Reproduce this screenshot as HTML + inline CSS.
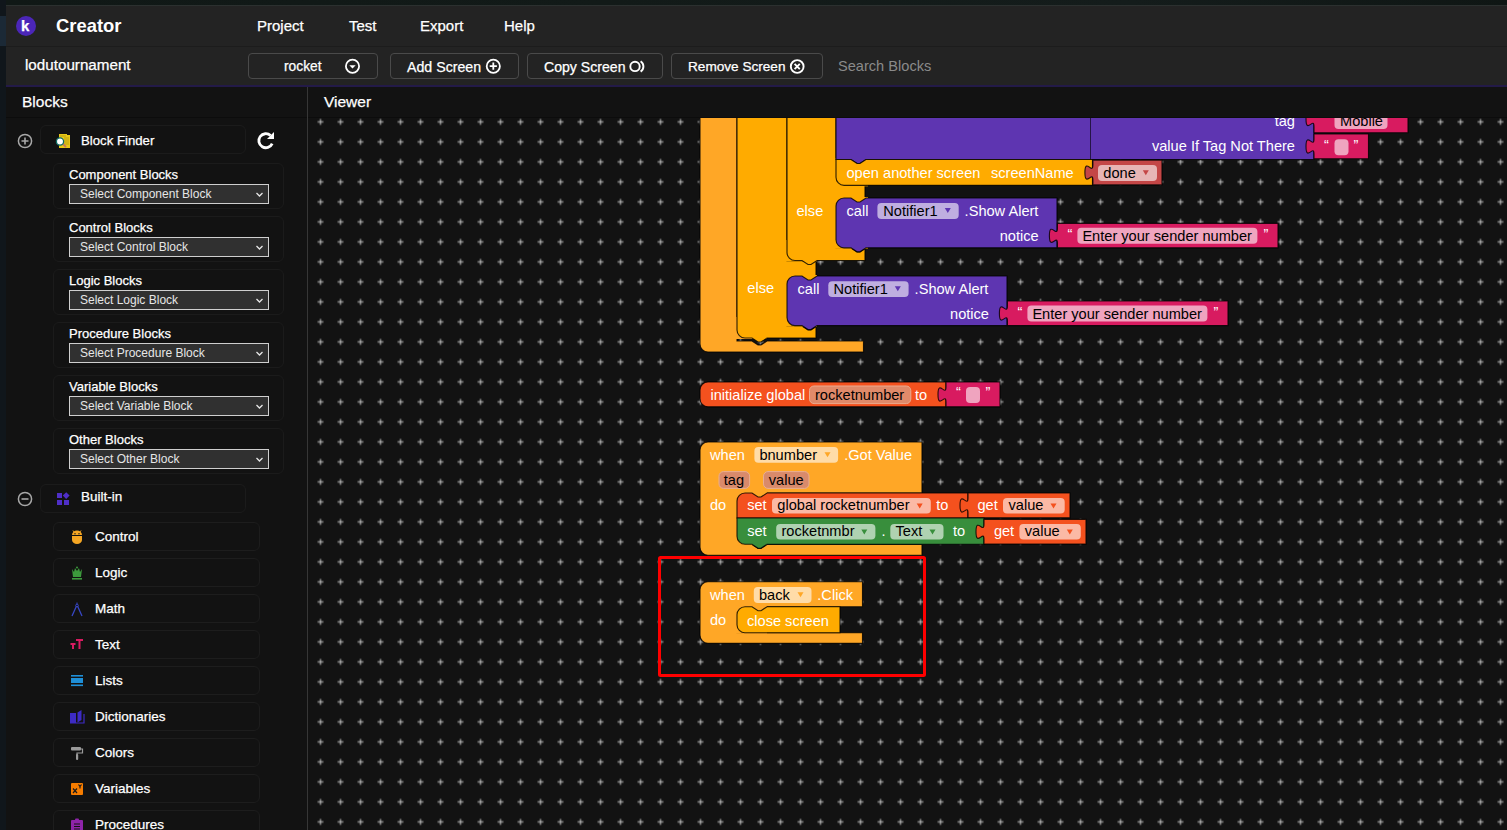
<!DOCTYPE html>
<html><head><meta charset="utf-8">
<style>
*{box-sizing:border-box;margin:0;padding:0}
html,body{width:1507px;height:830px;overflow:hidden;background:#121212;font-family:"Liberation Sans",sans-serif;color:#fff}
.a{position:absolute;white-space:pre}
div.a{-webkit-text-stroke:0.25px currentColor}
div.selt,div.ns{-webkit-text-stroke:0}
#strip{left:0;top:0;width:6px;height:830px;background:#10161b}
#strip2{left:0;top:16px;width:6px;height:30px;background:#1b2936}
#topstrip{left:6px;top:0;width:1501px;height:5px;background:linear-gradient(90deg,#101816,#121a18 40%,#141c1b 75%,#0f1614)}
#hdr1{left:6px;top:5px;width:1501px;height:41px;background:#232323;border-top:1px solid #2b302f}
#hdr1b{left:6px;top:46px;width:1501px;height:1px;background:#1c1c1c}
#hdr2{left:6px;top:47px;width:1501px;height:38px;background:#232323}
#pline{left:6px;top:85px;width:1501px;height:2px;background:#231a48}
#side{left:6px;top:87px;width:301px;height:743px;background:#121212}
#vline{left:307px;top:87px;width:1px;height:743px;background:#363636}
#ws{left:308px;top:87px;width:1199px;height:743px;background:#121212}
#hline{left:6px;top:117px;width:1501px;height:1px;background:#0c0c0c}
.nav{font-size:15px;top:17px}
.btn{top:53px;height:26px;border:1px solid #4a4a4a;border-radius:4px}
.bt{font-size:14.4px;top:58.5px}
.card{border:1px solid #1b1b1b;border-radius:6px;background:#121212}
.lbl{font-size:13px}
.sel{height:20px;background:#303030;border:1px solid #cfcfcf;width:200px;left:69px}
.selt{font-size:12px;color:#e6e6e6}
.item{left:53px;width:207px;height:29px;border:1px solid #1d1d1d;border-radius:6px;background:#121212}
.it{font-size:13.5px;left:95px;margin-top:1px}
</style></head><body>
<div class="a" id="strip"></div>
<div class="a" id="strip2"></div>
<div class="a" id="topstrip"></div>
<div class="a" id="hdr1"></div>
<div class="a" id="hdr1b"></div>
<div class="a" id="hdr2"></div>
<div class="a" id="pline"></div>
<div class="a" id="side"></div>
<div class="a" id="ws"></div>
<div class="a" id="hline"></div>
<div class="a" id="vline"></div>

<!-- header row 1 -->
<div class="a" style="left:16px;top:16px;width:20px;height:20px;border-radius:50%;background:#4b26b8"></div>
<div class="a" style="left:21px;top:16px;font-size:15px;font-weight:700;line-height:20px">k</div>
<div class="a ns" style="left:56px;top:15px;font-size:18.4px;font-weight:700">Creator</div>
<div class="a nav" style="left:257px">Project</div>
<div class="a nav" style="left:349px">Test</div>
<div class="a nav" style="left:420px">Export</div>
<div class="a nav" style="left:504px">Help</div>

<!-- header row 2 -->
<div class="a" style="left:25px;top:56px;font-size:15.2px">lodutournament</div>
<div class="a btn" style="left:248px;width:130px"></div>
<div class="a bt" style="left:284px;font-size:13.8px">rocket</div>
<div class="a btn" style="left:390px;width:129px"></div>
<div class="a bt" style="left:407px;font-size:14.2px">Add Screen</div>
<div class="a btn" style="left:527px;width:136px"></div>
<div class="a bt" style="left:544px;font-size:14.1px">Copy Screen</div>
<div class="a btn" style="left:671px;width:152px"></div>
<div class="a bt" style="left:688px;font-size:13.6px;top:59px">Remove Screen</div>
<div class="a ns" style="left:838px;top:58px;font-size:14.6px;color:#8a8a8a">Search Blocks</div>


<svg class="a" style="left:344px;top:58px" width="18" height="18"><circle cx="8.5" cy="8.3" r="6.6" fill="none" stroke="#fff" stroke-width="1.8"/><path d="M5.3 7.2 h6.4 l-3.2 3.4 z" fill="#fff"/></svg>
<svg class="a" style="left:484px;top:58px" width="18" height="18"><circle cx="9.3" cy="8.2" r="6.6" fill="none" stroke="#fff" stroke-width="1.8"/><path d="M9.3 4.6 v7.2 M5.7 8.2 h7.2" stroke="#fff" stroke-width="1.8"/></svg>
<svg class="a" style="left:626px;top:58px" width="22" height="18"><circle cx="9" cy="8.4" r="4.7" fill="none" stroke="#fff" stroke-width="1.9"/><path d="M14.6 3.2 A6.2 6.2 0 0 1 14.6 13.6" fill="none" stroke="#fff" stroke-width="1.9"/></svg>
<svg class="a" style="left:788px;top:58px" width="18" height="18"><circle cx="9.2" cy="8.5" r="6.4" fill="none" stroke="#fff" stroke-width="1.9"/><path d="M6.6 5.9 l5.2 5.2 M11.8 5.9 l-5.2 5.2" stroke="#fff" stroke-width="1.9"/></svg>
<!-- panel headers -->
<div class="a" style="left:22px;top:93px;font-size:15.5px">Blocks</div>
<div class="a" style="left:324px;top:93px;font-size:15.5px">Viewer</div>


<!-- sidebar -->
<svg class="a" style="left:17px;top:133px" width="16" height="16"><circle cx="8" cy="8" r="6.6" fill="none" stroke="#a8a8a8" stroke-width="1.5"/><path d="M8 4.5v7M4.5 8h7" stroke="#a8a8a8" stroke-width="1.6"/></svg>
<div class="a card" style="left:40px;top:125px;width:206px;height:29px"></div>
<svg class="a" style="left:55px;top:132px" width="18" height="18">
 <path d="M4 2 h8 l0 1 h3 v13 h-11 z" fill="#E8C817"/><path d="M5 4h6M9 6h5M9 8h5M9 10h5M9 12h5" stroke="#A8900E" stroke-width="0.7"/>
 <path d="M7 11 l4 4" stroke="#C8785A" stroke-width="1.8"/><circle cx="5" cy="9.5" r="3.6" fill="#fff" stroke="#0F6E64" stroke-width="1.3"/></svg>
<div class="a" style="left:81px;top:132.5px;font-size:13.2px">Block Finder</div>
<svg class="a" style="left:255px;top:130px" width="22" height="22"><path d="M17.2 13.6 A7 7 0 1 1 15.6 5.6" fill="none" stroke="#fff" stroke-width="2.8"/><path d="M19 2 V9 H12 Z" fill="#fff"/></svg>
<div class="a card" style="left:53px;top:163px;width:231px;height:46px"></div>
<div class="a lbl" style="left:69px;top:167px">Component Blocks</div>
<div class="a sel" style="top:184px"></div>
<div class="a selt" style="left:80px;top:187px">Select Component Block</div>
<svg class="a" style="left:255px;top:191px" width="10" height="8"><path d="M1.5 2 L4.5 5 L7.5 2" fill="none" stroke="#e6e6e6" stroke-width="1.3"/></svg>
<div class="a card" style="left:53px;top:216px;width:231px;height:46px"></div>
<div class="a lbl" style="left:69px;top:220px">Control Blocks</div>
<div class="a sel" style="top:237px"></div>
<div class="a selt" style="left:80px;top:240px">Select Control Block</div>
<svg class="a" style="left:255px;top:244px" width="10" height="8"><path d="M1.5 2 L4.5 5 L7.5 2" fill="none" stroke="#e6e6e6" stroke-width="1.3"/></svg>
<div class="a card" style="left:53px;top:269px;width:231px;height:46px"></div>
<div class="a lbl" style="left:69px;top:273px">Logic Blocks</div>
<div class="a sel" style="top:290px"></div>
<div class="a selt" style="left:80px;top:293px">Select Logic Block</div>
<svg class="a" style="left:255px;top:297px" width="10" height="8"><path d="M1.5 2 L4.5 5 L7.5 2" fill="none" stroke="#e6e6e6" stroke-width="1.3"/></svg>
<div class="a card" style="left:53px;top:322px;width:231px;height:46px"></div>
<div class="a lbl" style="left:69px;top:326px">Procedure Blocks</div>
<div class="a sel" style="top:343px"></div>
<div class="a selt" style="left:80px;top:346px">Select Procedure Block</div>
<svg class="a" style="left:255px;top:350px" width="10" height="8"><path d="M1.5 2 L4.5 5 L7.5 2" fill="none" stroke="#e6e6e6" stroke-width="1.3"/></svg>
<div class="a card" style="left:53px;top:375px;width:231px;height:46px"></div>
<div class="a lbl" style="left:69px;top:379px">Variable Blocks</div>
<div class="a sel" style="top:396px"></div>
<div class="a selt" style="left:80px;top:399px">Select Variable Block</div>
<svg class="a" style="left:255px;top:403px" width="10" height="8"><path d="M1.5 2 L4.5 5 L7.5 2" fill="none" stroke="#e6e6e6" stroke-width="1.3"/></svg>
<div class="a card" style="left:53px;top:428px;width:231px;height:46px"></div>
<div class="a lbl" style="left:69px;top:432px">Other Blocks</div>
<div class="a sel" style="top:449px"></div>
<div class="a selt" style="left:80px;top:452px">Select Other Block</div>
<svg class="a" style="left:255px;top:456px" width="10" height="8"><path d="M1.5 2 L4.5 5 L7.5 2" fill="none" stroke="#e6e6e6" stroke-width="1.3"/></svg>

<svg class="a" style="left:17px;top:491px" width="16" height="16"><circle cx="8" cy="8" r="6.6" fill="none" stroke="#a8a8a8" stroke-width="1.5"/><path d="M4.5 8h7" stroke="#a8a8a8" stroke-width="1.6"/></svg>
<div class="a card" style="left:40px;top:484px;width:206px;height:29px"></div>
<svg class="a" style="left:55px;top:490px" width="18" height="18"><g fill="#4F2FC8"><rect x="2" y="3" width="5" height="5"/><rect x="2" y="10" width="5" height="5"/><rect x="9" y="10" width="5" height="5"/><path d="M11.2 2.2 L14.6 5.6 L11.2 9 L7.8 5.6 Z"/></g></svg>
<div class="a" style="left:81px;top:489px;font-size:13.5px">Built-in</div>
<div class="a item" style="top:522px"></div>
<svg class="a" style="left:69px;top:529px" width="16" height="16"><path d="M3 6 a5 4.5 0 0 1 10 0 z" fill="#F5A623"/><path d="M3 7 h10 v4 a5 4 0 0 1 -10 0 z" fill="#F5A623"/><path d="M4 1.5 l1.5 2 M12 1.5 l-1.5 2" stroke="#F5A623" stroke-width="1"/><circle cx="6" cy="4.8" r="0.7" fill="#121212"/><circle cx="10" cy="4.8" r="0.7" fill="#121212"/></svg>
<div class="a it" style="top:528px">Control</div>
<div class="a item" style="top:558px"></div>
<svg class="a" style="left:69px;top:565px" width="16" height="16"><path d="M3 4 l2 3 l1 -4 l2 3 l2 -3 l1 4 l2 -3 l-1 8 h-8 z" fill="#3C9A3C"/><rect x="3" y="13" width="10" height="1.6" fill="#3C9A3C"/><circle cx="8" cy="2.5" r="1" fill="#3C9A3C"/></svg>
<div class="a it" style="top:564px">Logic</div>
<div class="a item" style="top:594px"></div>
<svg class="a" style="left:69px;top:601px" width="16" height="16"><path d="M3 15 L7.5 5 M13 15 L8.5 5" stroke="#3747C4" stroke-width="1.3" fill="none"/><circle cx="8" cy="4.5" r="1.3" fill="none" stroke="#3747C4" stroke-width="1"/><path d="M8 1.5v1.6" stroke="#3747C4"/></svg>
<div class="a it" style="top:600px">Math</div>
<div class="a item" style="top:630px"></div>
<svg class="a" style="left:69px;top:637px" width="16" height="16"><path d="M1.5 7 h5 M4 7 v5 M7 3 h7 M10.5 3 v9" stroke="#D81B60" stroke-width="2" fill="none"/></svg>
<div class="a it" style="top:636px">Text</div>
<div class="a item" style="top:666px"></div>
<svg class="a" style="left:69px;top:673px" width="16" height="16"><rect x="2" y="2" width="12" height="1.6" fill="#1E8FD8"/><rect x="2" y="5" width="12" height="5" fill="#1E8FD8"/><rect x="2" y="11.5" width="12" height="1.6" fill="#1E8FD8"/></svg>
<div class="a it" style="top:672px">Lists</div>
<div class="a item" style="top:702px"></div>
<svg class="a" style="left:69px;top:709px" width="16" height="16"><path d="M1 4 h6 v10 h-6 z" fill="#3D2BC4"/><path d="M8.5 3.5 l4 -2.5 v10 l-4 2.5 z" fill="#3D2BC4"/><path d="M1 14 h14 v-9" stroke="#3D2BC4" stroke-width="1.2" fill="none"/></svg>
<div class="a it" style="top:708px">Dictionaries</div>
<div class="a item" style="top:738px"></div>
<svg class="a" style="left:69px;top:745px" width="16" height="16"><rect x="2" y="2" width="10" height="3.5" rx="1" fill="#9a9a9a"/><path d="M12 4 h1.5 v4 h-5.5 v2" stroke="#9a9a9a" stroke-width="1.2" fill="none"/><rect x="7" y="9" width="2.2" height="6" rx="1" fill="#9a9a9a"/></svg>
<div class="a it" style="top:744px">Colors</div>
<div class="a item" style="top:774px"></div>
<svg class="a" style="left:69px;top:781px" width="16" height="16"><rect x="2" y="2" width="12" height="12" rx="1" fill="#F57C00"/><path d="M4 7.5 l4 4.5 M8 7.5 l-4 4.5 M9.5 3.5 l1.5 2 l1.5 -2 M11 5.5 v2" stroke="#1a1a1a" stroke-width="1.2" fill="none"/></svg>
<div class="a it" style="top:780px">Variables</div>
<div class="a item" style="top:810px"></div>
<svg class="a" style="left:69px;top:817px" width="16" height="16"><rect x="2" y="3" width="12" height="13" rx="1" fill="#8E24AA"/><rect x="6" y="1.5" width="4" height="3" rx="1" fill="#8E24AA"/><path d="M5 7 h6 M5 9.5 h6 M5 12 h6" stroke="#121212" stroke-width="1"/></svg>
<div class="a it" style="top:816px">Procedures</div>
<svg class="a" style="left:308px;top:118px" width="1199" height="712" font-family="Liberation Sans, sans-serif"><g transform="translate(-308,-118)">
<defs><pattern id="grid" x="310" y="111.4" width="20" height="20" patternUnits="userSpaceOnUse">
<rect x="7.5" y="9.6" width="6" height="1.8" fill="#fff" fill-opacity="0.42"/><rect x="9.6" y="7.5" width="1.8" height="6" fill="#fff" fill-opacity="0.42"/>
</pattern></defs>
<rect x="308" y="118" width="1199" height="712" fill="url(#grid)"/>
<path d="M700 100 V344 a8 8 0 0 0 8 8 H863.5 V341 H767 l-6 4 -3 0 -6 -4 H737 V100 Z" fill="#FFA726" stroke="#000" stroke-opacity="0.8" stroke-width="1.15"/>
<rect x="736" y="317" width="31" height="22" rx="0" fill="#FFA726" />
<path d="M737 100 V330 a8 8 0 0 0 8 8 H752 l6 4 3 0 6 -4 H816 V326 H817 l-6 4 -3 0 -6 -4 H787 V276 H802 l6 4 3 0 6 -4 H816 V261 H787 V100 Z" fill="#FFAB00" stroke="#000" stroke-opacity="0.8" stroke-width="1.15"/>
<text x="747.3" y="292.8" fill="#fff" font-size="14.6" text-anchor="start">else</text>
<rect x="786" y="240" width="31" height="21.5" rx="0" fill="#FFAB00" />
<rect x="786" y="275" width="31" height="51.6" rx="0" fill="#FFAB00" />
<path d="M787 100 V252.5 a8 8 0 0 0 8 8 H802 l6 4 3 0 6 -4 H865 V248 H866 l-6 4 -3 0 -6 -4 H836 V198 H851 l6 4 3 0 6 -4 H865 V185.3 H836 V100 Z" fill="#FFAB00" stroke="#000" stroke-opacity="0.8" stroke-width="1.15"/>
<text x="796.5" y="215.5" fill="#fff" font-size="14.6" text-anchor="start">else</text>
<rect x="835" y="158.5" width="33" height="27.8" rx="0" fill="#FFAB00" />
<rect x="835" y="197" width="33" height="51.8" rx="0" fill="#FFAB00" />
<path d="M836 100 H1314 V159.5 H866 l-6 4 -3 0 -6 -4 H836 Z" fill="#5E35B1" stroke="#000" stroke-opacity="0.8" stroke-width="1.15"/>
<path d="M1090.5 100 V159.5" stroke="#000" stroke-opacity="0.6" stroke-width="1"/>
<text x="1295" y="126.4" fill="#fff" font-size="14.6" text-anchor="end">tag</text>
<text x="1295" y="151.4" fill="#fff" font-size="14.6" text-anchor="end">value If Tag Not There</text>
<path d="M1314 100 H1408 V132.7 H1314 V126.5 c 0,-10 -8,8 -8,-7.5 s 8,2.5 8,-7.5 Z" fill="#D81B60" stroke="#000" stroke-opacity="0.8" stroke-width="1.15"/>
<rect x="1334.5" y="100" width="53" height="29" rx="4" fill="#EFA4BF" />
<text x="1340" y="125.7" fill="#000" font-size="14.6" text-anchor="start">Mobile</text>
<text x="1393.5" y="121.5" fill="#fff" font-size="14.6" text-anchor="start">”</text>
<path d="M1314 134 H1368.5 V158.7 H1314 V154 c 0,-10 -8,8 -8,-7.5 s 8,2.5 8,-7.5 Z" fill="#D81B60" stroke="#000" stroke-opacity="0.8" stroke-width="1.15"/>
<text x="1324" y="149.5" fill="#fff" font-size="14.6" text-anchor="start">“</text>
<rect x="1334.5" y="139.2" width="14" height="16" rx="4" fill="#EFA4BF" />
<text x="1353.5" y="149.5" fill="#fff" font-size="14.6" text-anchor="start">”</text>
<path d="M836 159.5 H851 l6 4 3 0 6 -4 H1092.5 V185.3 H844 a8 8 0 0 1 -8 -8 Z" fill="#FFAB00" stroke="#000" stroke-opacity="0.8" stroke-width="1.15"/>
<text x="846.5" y="177.7" fill="#fff" font-size="14.6" text-anchor="start">open another screen</text>
<text x="991" y="177.7" fill="#fff" font-size="14.6" text-anchor="start">screenName</text>
<path d="M1092.9 160.1 H1162 V184.9 H1092.9 V180.1 c 0,-10 -8,8 -8,-7.5 s 8,2.5 8,-7.5 Z" fill="#C44646" stroke="#000" stroke-opacity="0.8" stroke-width="1.15"/>
<rect x="1098" y="165" width="59" height="16" rx="4" fill="#E7B5B5" />
<text x="1103.3" y="177.8" fill="#000" font-size="14.6" text-anchor="start">done</text>
<path d="M1142.8 170.2 h6 l-3 5 z" fill="#C44646"/>
<path d="M836 206 a8 8 0 0 1 8 -8 H851 l6 4 3 0 6 -4 H1057 V247.8 H866 l-6 4 -3 0 -6 -4 H844 a8 8 0 0 1 -8 -8 Z" fill="#5E35B1" stroke="#000" stroke-opacity="0.8" stroke-width="1.15"/>
<text x="846.5" y="216.2" fill="#fff" font-size="14.6" text-anchor="start">call</text>
<rect x="877.4" y="203" width="81.3" height="16" rx="4" fill="#BFAEE0" />
<text x="883.3" y="215.9" fill="#000" font-size="14.6" text-anchor="start">Notifier1</text>
<path d="M944.8 208 h6 l-3 5 z" fill="#5E35B1"/>
<text x="964.6" y="216.2" fill="#fff" font-size="14.6" text-anchor="start">.Show Alert</text>
<text x="1038.7" y="241" fill="#fff" font-size="14.6" text-anchor="end">notice</text>
<path d="M1057.4 223.3 H1278.0 V247.8 H1057.4 V243.3 c 0,-10 -8,8 -8,-7.5 s 8,2.5 8,-7.5 Z" fill="#D81B60" stroke="#000" stroke-opacity="0.8" stroke-width="1.15"/>
<text x="1067.4" y="238.8" fill="#fff" font-size="14.6" text-anchor="start">“</text>
<rect x="1077.4" y="227.8" width="180" height="16" rx="4" fill="#EFA4BF" />
<text x="1082.4" y="240.8" fill="#000" font-size="14.6" text-anchor="start">Enter your sender number</text>
<text x="1263.4" y="238.8" fill="#fff" font-size="14.6" text-anchor="start">”</text>
<path d="M787 284 a8 8 0 0 1 8 -8 H802 l6 4 3 0 6 -4 H1007 V325.6 H817 l-6 4 -3 0 -6 -4 H795 a8 8 0 0 1 -8 -8 Z" fill="#5E35B1" stroke="#000" stroke-opacity="0.8" stroke-width="1.15"/>
<text x="797.5" y="294.2" fill="#fff" font-size="14.6" text-anchor="start">call</text>
<rect x="828.3" y="281.3" width="80.3" height="15.8" rx="4" fill="#BFAEE0" />
<text x="833.5" y="293.8" fill="#000" font-size="14.6" text-anchor="start">Notifier1</text>
<path d="M894.8 286.2 h6 l-3 5 z" fill="#5E35B1"/>
<text x="914.6" y="294.2" fill="#fff" font-size="14.6" text-anchor="start">.Show Alert</text>
<text x="989" y="318.7" fill="#fff" font-size="14.6" text-anchor="end">notice</text>
<path d="M1007.4 301 H1228.0 V325.6 H1007.4 V321 c 0,-10 -8,8 -8,-7.5 s 8,2.5 8,-7.5 Z" fill="#D81B60" stroke="#000" stroke-opacity="0.8" stroke-width="1.15"/>
<text x="1017.4" y="316.5" fill="#fff" font-size="14.6" text-anchor="start">“</text>
<rect x="1027.4" y="305.5" width="180" height="16" rx="4" fill="#EFA4BF" />
<text x="1032.4" y="318.5" fill="#000" font-size="14.6" text-anchor="start">Enter your sender number</text>
<text x="1213.4" y="316.5" fill="#fff" font-size="14.6" text-anchor="start">”</text>
<path d="M708 381.9 H946 V406.8 H708 a8 8 0 0 1 -8 -8 V389.9 a8 8 0 0 1 8 -8 Z" fill="#F4511E" stroke="#000" stroke-opacity="0.8" stroke-width="1.15"/>
<text x="710.4" y="400" fill="#fff" font-size="14.6" text-anchor="start">initialize global</text>
<rect x="809.5" y="386" width="101.3" height="17.6" rx="4.5" fill="#E08A6A" stroke="#EBAA8E" stroke-width="1"/>
<text x="815" y="400" fill="#000" font-size="14.6" text-anchor="start">rocketnumber</text>
<text x="915" y="400" fill="#fff" font-size="14.6" text-anchor="start">to</text>
<path d="M946 381.9 H1000 V406.8 H946 V402 c 0,-10 -8,8 -8,-7.5 s 8,2.5 8,-7.5 Z" fill="#D81B60" stroke="#000" stroke-opacity="0.8" stroke-width="1.15"/>
<text x="956" y="397" fill="#fff" font-size="14.6" text-anchor="start">“</text>
<rect x="966" y="387" width="14" height="16" rx="4" fill="#EFA4BF" />
<text x="985.5" y="397" fill="#fff" font-size="14.6" text-anchor="start">”</text>
<path d="M700 450 a8 8 0 0 1 8 -8 H922 V493 H767 l-6 4 -3 0 -6 -4 H737 V544.4 H752 l6 4 3 0 6 -4 H922 V555.2 H708 a8 8 0 0 1 -8 -8 Z" fill="#FFA726" stroke="#000" stroke-opacity="0.8" stroke-width="1.15"/>
<text x="710" y="459.8" fill="#fff" font-size="14.6" text-anchor="start">when</text>
<rect x="754.4" y="447" width="83.7" height="15.7" rx="4" fill="#FFDCA8" />
<text x="759.4" y="459.8" fill="#000" font-size="14.6" text-anchor="start">bnumber</text>
<path d="M824.5 452.2 h6 l-3 5 z" fill="#FFA726"/>
<text x="844.2" y="459.8" fill="#fff" font-size="14.6" text-anchor="start">.Got Value</text>
<rect x="719" y="471.6" width="30.6" height="16.8" rx="4.5" fill="#D98A6B" stroke="#E8AE92" stroke-width="1"/>
<text x="723.8" y="484.6" fill="#000" font-size="14.6" text-anchor="start">tag</text>
<rect x="763.5" y="471.6" width="45.5" height="16.8" rx="4.5" fill="#D98A6B" stroke="#E8AE92" stroke-width="1"/>
<text x="768.8" y="484.6" fill="#000" font-size="14.6" text-anchor="start">value</text>
<text x="710" y="509.6" fill="#fff" font-size="14.6" text-anchor="start">do</text>
<rect x="736" y="492" width="31" height="53.2" rx="0" fill="#FFA726" />
<path d="M737 501 a8 8 0 0 1 8 -8 H752 l6 4 3 0 6 -4 H968 V518 H737 Z" fill="#F4511E" stroke="#000" stroke-opacity="0.8" stroke-width="1.15"/>
<text x="747.2" y="510.4" fill="#fff" font-size="14.6" text-anchor="start">set</text>
<rect x="772" y="498" width="158.8" height="15.5" rx="4" fill="#FBB9A5" />
<text x="777.3" y="510.2" fill="#000" font-size="14.6" text-anchor="start">global rocketnumber</text>
<path d="M916.7 503.6 h6 l-3 5 z" fill="#F4511E"/>
<text x="936.2" y="510.4" fill="#fff" font-size="14.6" text-anchor="start">to</text>
<path d="M968 493 H1070 V517.8 H968 V513 c 0,-10 -8,8 -8,-7.5 s 8,2.5 8,-7.5 Z" fill="#F4511E" stroke="#000" stroke-opacity="0.8" stroke-width="1.15"/>
<text x="977.5" y="510.4" fill="#fff" font-size="14.6" text-anchor="start">get</text>
<rect x="1003" y="498" width="61.7" height="15.5" rx="4" fill="#FBB9A5" />
<text x="1008.5" y="510.2" fill="#000" font-size="14.6" text-anchor="start">value</text>
<path d="M1050.5 503.6 h6 l-3 5 z" fill="#F4511E"/>
<path d="M737 518 H984 V544.2 H767 l-6 4 -3 0 -6 -4 H745 a8 8 0 0 1 -8 -8 Z" fill="#388E3C" stroke="#000" stroke-opacity="0.8" stroke-width="1.15"/>
<text x="747.2" y="536.1" fill="#fff" font-size="14.6" text-anchor="start">set</text>
<rect x="776.2" y="524" width="99.2" height="15.6" rx="4" fill="#AFD2B1" />
<text x="781.5" y="536.2" fill="#000" font-size="14.6" text-anchor="start">rocketnmbr</text>
<path d="M861.3 529.4 h6 l-3 5 z" fill="#388E3C"/>
<text x="881.5" y="536.1" fill="#fff" font-size="14.6" text-anchor="start">.</text>
<rect x="890.3" y="524" width="53.2" height="15.6" rx="4" fill="#AFD2B1" />
<text x="895.5" y="536.2" fill="#000" font-size="14.6" text-anchor="start">Text</text>
<path d="M929.5 529.4 h6 l-3 5 z" fill="#388E3C"/>
<text x="953" y="536.1" fill="#fff" font-size="14.6" text-anchor="start">to</text>
<path d="M984 519.3 H1086 V544.1 H984 V539.3 c 0,-10 -8,8 -8,-7.5 s 8,2.5 8,-7.5 Z" fill="#F4511E" stroke="#000" stroke-opacity="0.8" stroke-width="1.15"/>
<text x="993.9" y="536.1" fill="#fff" font-size="14.6" text-anchor="start">get</text>
<rect x="1019.4" y="524" width="61.4" height="15.6" rx="4" fill="#FBB9A5" />
<text x="1024.8" y="536.2" fill="#000" font-size="14.6" text-anchor="start">value</text>
<path d="M1066.8 529.4 h6 l-3 5 z" fill="#F4511E"/>
<path d="M700 589.7 a8 8 0 0 1 8 -8 H862.5 V606.7 H767 l-6 4 -3 0 -6 -4 H737 V632.7 H862.5 V643.3 H708 a8 8 0 0 1 -8 -8 Z" fill="#FFA726" stroke="#000" stroke-opacity="0.8" stroke-width="1.15"/>
<text x="710" y="600" fill="#fff" font-size="14.6" text-anchor="start">when</text>
<rect x="753.8" y="587" width="57.7" height="16" rx="4" fill="#FFDCA8" />
<text x="759" y="599.8" fill="#000" font-size="14.6" text-anchor="start">back</text>
<path d="M797.5 592.2 h6 l-3 5 z" fill="#FFA726"/>
<text x="817.3" y="600" fill="#fff" font-size="14.6" text-anchor="start">.Click</text>
<text x="710" y="625" fill="#fff" font-size="14.6" text-anchor="start">do</text>
<rect x="736" y="605.7" width="31" height="28" rx="0" fill="#FFA726" />
<path d="M737 614.7 a8 8 0 0 1 8 -8 H752 l6 4 3 0 6 -4 H840 V632.7 H745 a8 8 0 0 1 -8 -8 Z" fill="#FFAB00" stroke="#000" stroke-opacity="0.8" stroke-width="1.15"/>
<text x="747" y="625.5" fill="#fff" font-size="14.6" text-anchor="start">close screen</text>
<rect x="659.5" y="557.5" width="265" height="118" fill="none" stroke="#FF0000" stroke-width="3" rx="1"/>
</g></svg>
</body></html>
